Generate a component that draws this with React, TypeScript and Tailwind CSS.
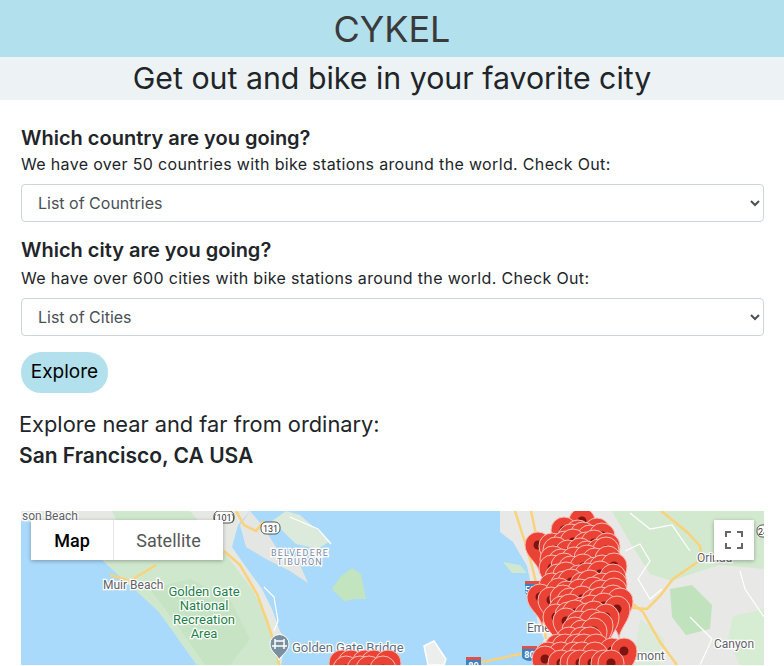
// rows of marker heads: [y, first x, last x, step]
const pinRows: [number, number, number, number][] = [
  [522, 582, 582, 9],
  [532, 563, 597, 17],
  [538, 572, 604, 10],
  [546, 538, 538, 9],
  [545, 552, 608, 11],
  [553, 558, 614, 10],
  [561, 552, 616, 11],
  [569, 553, 618, 10],
  [577, 556, 616, 11],
  [585, 552, 620, 10],
  [598, 540, 540, 9],
  [593, 558, 620, 11],
  [601, 552, 622, 10],
  [609, 560, 616, 11],
  [616, 556, 608, 10],
  [624, 568, 604, 11],
  [632, 574, 598, 10],
  [641, 570, 592, 11],
  [648, 556, 600, 10],
  [652, 612, 622, 10],
  [656, 550, 604, 11],
  [660, 545, 545, 9],
  [664, 562, 612, 10],
  [664, 340, 390, 12],
  [670, 346, 384, 12],
];

// small fixed offsets so the markers don't sit on a visible grid
const pins: [number, number][] = pinRows.flatMap(([y, first, last, step], r) => {
  const row: [number, number][] = [];
  for (let x = first, i = 0; x <= last; x += step, i++) {
    const wobble = first === last ? 0 : ((i * 7 + r * 3) % 5) - 2;
    const lift = first === last || y > 640 ? 0 : ((i * 3 + r) % 5) - 2;
    row.push([x + wobble, y + lift]);
  }
  return row;
});

function Pin({ x, y }: { x: number; y: number }) {
  return (
    <g transform={`translate(${x} ${y})`}>
      <path
        d="M2 29C0 17-13 12-13 0a13 13 0 1 1 26 0C13 12 4 17 2 29Z"
        fill="#ea4335"
        stroke="#f7bcb6"
        strokeWidth="1"
      />
      <circle cx="0" cy="0" r="4.500" fill="#7d1410" />
    </g>
  );
}

function Shield({ x, y, label, w = 16 }: { x: number; y: number; label: string; w?: number }) {
  return (
    <g>
      <rect x={x} y={y} width={w} height="12" rx="5" fill="#fff" stroke="#555" strokeWidth="1" />
      <text x={x + w / 2} y={y + 9.500} textAnchor="middle" fontSize="9" fontFamily="Roboto" fill="#333">
        {label}
      </text>
    </g>
  );
}

function Interstate({ x, y, label }: { x: number; y: number; label: string }) {
  return (
    <g>
      <path d={`M${x} ${y}h15v3h-15Z`} fill="#d9534a" />
      <path d={`M${x} ${y + 3}h15v8q-1 3-7.500 4q-6.500-1-7.500-4Z`} fill="#3f7fc4" />
      <text x={x + 7.500} y={y + 11.500} textAnchor="middle" fontSize="9" fontFamily="Roboto" fontWeight="700" fill="#fff">
        {label}
      </text>
    </g>
  );
}

const mapLabel = "font-['Roboto'] [paint-order:stroke] stroke-white stroke-[2.5px]";

function MapArt() {
  return (
    <svg className="block h-full w-full" viewBox="21 512 743 154" preserveAspectRatio="none">
      <rect x="21" y="512" width="743" height="154" fill="#a9d9fb" />
      {/* marin */}
      <path d="M21 512H250L238 526L232 548L246 568L262 590L272 610L280 632L286 642L281 666H197L177 638L160 612L136 590L112 570L86 545L50 525L21 522Z" fill="#e6e8e4" />
      <path d="M112 512H190L222 550L252 590L268 620L276 650L280 666H197L177 638L158 612L134 590L116 574L96 552L120 530Z" fill="#cfe8cd" />
      <path d="M150 590L190 580L230 600L250 640L230 666H205L180 630Z" fill="#c6e3c4" />
      {/* tiburon */}
      <path d="M250 512L262 526L276 548L300 566L308 584L290 572L266 560L246 548L240 526Z" fill="#e4e6e3" />
      <path d="M286 512L300 516L330 542L318 550L296 545L272 522Z" fill="#dbeadb" />
      <path d="M352 569L361 575L366 600L356 600L344 602L332 590L340 578Z" fill="#c2e4bf" />
      {/* east bay */}
      <path d="M500 512H764V666H533L544 640L538 626L532 590L527 567L513 543L500 533Z" fill="#e8e9e6" />
      <path d="M612 512H764V570L720 566L700 572L672 582L650 575L628 540Z" fill="#d2e9cf" />
      <path d="M670 590L692 586L712 606L710 630L686 636L672 618Z" fill="#c0e2bd" />
      <path d="M733 617L764 610V666H740L728 640Z" fill="#d6ecd3" />
      <path d="M640 620L665 640L660 666H632Z" fill="#dcebd9" />
      <path d="M503 563L520 566L527 574L512 574Z" fill="#cfe8cf" />
      {/* treasure island */}
      <path d="M424 647L434 642L446 660L444 666H428Z" fill="#eceeed" stroke="#fff" strokeWidth="1.500" />
      {/* local roads */}
      <g fill="none" stroke="#ffffff" strokeWidth="1.200">
        <path d="M290 518L318 530L331 545" />
        <path d="M264 588L274 598L278 622L274 632" />
        <path d="M625 552L640 545L650 562L638 580L650 600L662 590" />
        <path d="M630 514L650 530L672 526L690 552" />
        <path d="M740 572L745 590L764 618" />
        <path d="M690 618L712 640L700 666" />
        <path d="M64 512L92 530L116 538" />
      </g>
      {/* highways */}
      <g fill="none" stroke="#fad27a" strokeWidth="2.500">
        <path d="M236 512L244 526L256 532L264 522" />
        <path d="M224 552L240 566L257 595L268 625L276 650L279 666" />
        <path d="M110 576L130 582L156 566" />
        <path d="M515 512L524 540L532 567L540 600L546 640" />
        <path d="M531 512L537 540" />
        <path d="M660 511L687 533L700 547L702 560L673 580L660 597L647 610L622 608" />
        <path d="M622 596L643 613L660 643L677 666" />
        <path d="M468 666L525 654" />
      </g>
      <text x="22" y="521" fontSize="12" fill="#5f6368" className={mapLabel}>son Beach</text>
      <text x="103" y="590" fontSize="12" fill="#5f6368" className={mapLabel}>Muir Beach</text>
      <g fontSize="13" fill="#1e8149" textAnchor="middle" className={mapLabel}>
        <text x="204" y="597">Golden Gate</text>
        <text x="204" y="611">National</text>
        <text x="204" y="625">Recreation</text>
        <text x="204" y="639">Area</text>
      </g>
      <g fontSize="9" fill="#7b8aa6" textAnchor="middle" letterSpacing="1.200" className={mapLabel}>
        <text x="300" y="557">BELVEDERE</text>
        <text x="300" y="566">TIBURON</text>
      </g>
      <text x="292" y="653" fontSize="13" fill="#5f7284" className={mapLabel}>Golden Gate Bridge</text>
      <text x="527" y="633" fontSize="12" fill="#5f6368" className={mapLabel}>Eme</text>
      <text x="630" y="661" fontSize="12" fill="#5f6368" className={mapLabel}>dmont</text>
      <text x="714" y="649" fontSize="12" fill="#5f6368" className={mapLabel}>Canyon</text>
      <text x="697" y="563" fontSize="12" fill="#5f6368" className={mapLabel}>Orinda</text>
      <Shield x={214} y={512} label="(101)" w={20} />
      <Shield x={261} y={523} label="131" w={19} />
      <Shield x={757} y={526} label="24" w={12} />
      <Interstate x={525} y={582} label="580" />
      <Interstate x={522} y={647} label="80" />
      <Interstate x={466} y={658} label="80" />
      <path d="M279 661c-1-5-9-8-9-16a9.500 9.500 0 1 1 19 0c0 8-8 11-10 16Z" fill="#7b909e" stroke="#fff" strokeWidth="1" />
      <path d="M275 640v10M284 640v10M272 647h15M275 642h9" stroke="#fff" strokeWidth="1.500" fill="none" />
      {pins.map(([x, y]) => (
        <Pin key={`${x}-${y}`} x={x} y={y} />
      ))}
    </svg>
  );
}

export default function App() {
  return (
    <div className="h-[666px] overflow-hidden bg-white font-['Inter','Open_Sans',sans-serif] text-[#212529]">
      <div className="flex h-[57px] items-center justify-center bg-[#b2e0ec]">
        <h1 className="text-[36px] leading-none text-[#3a3a3a]">CYKEL</h1>
      </div>
      <div className="flex h-[43px] items-center justify-center bg-[#edf3f4]">
        <h2 className="text-[30.300px] leading-none">Get out and bike in your favorite city</h2>
      </div>

      <div className="pl-[21px] pr-[20px] pt-[26px]">
        <h3 className="text-[20px] leading-[24px] font-semibold">Which country are you going?</h3>
        <p className="mt-[2px] text-[16px] leading-[24px] tracking-[0.340px]">We have over 50 countries with bike stations around the world. Check Out:</p>
        <select className="mt-[8px] block h-[38px] w-full rounded-[4px] border border-[#ced4da] bg-white pl-[12px] pr-[8px] text-[16px] text-[#495057]">
          <option>List of Countries</option>
        </select>

        <h3 className="mt-[16px] text-[20px] leading-[24px] font-semibold">Which city are you going?</h3>
        <p className="mt-[4px] text-[16px] leading-[24px] tracking-[0.340px]">We have over 600 cities with bike stations around the world. Check Out:</p>
        <select className="mt-[8px] block h-[38px] w-full rounded-[4px] border border-[#ced4da] bg-white pl-[12px] pr-[8px] text-[16px] text-[#495057]">
          <option>List of Cities</option>
        </select>

        <button className="mt-[16px] block h-[41px] w-[87px] rounded-[20px] bg-[#b2e0ec] text-[19px] text-black">Explore</button>

        <p className="mt-[16px] -ml-[2px] text-[21.800px] leading-[30px]">Explore near and far from ordinary:</p>
        <p className="-ml-[2px] mt-[2px] text-[21px] leading-[30px] font-semibold">San Francisco, CA USA</p>

        <div className="relative mt-[40px] h-[154px] overflow-hidden">
          <MapArt />
          <div className="absolute top-[9px] left-[10px] flex h-[40px] bg-white font-['Roboto',sans-serif] shadow-[0_1px_4px_rgba(0,0,0,0.3)]">
            <div className="flex w-[82px] items-center justify-center text-[18px] font-medium text-black">Map</div>
            <div className="flex w-[110px] items-center justify-center border-l border-[#e6e6e6] text-[18px] text-[#565656]">Satellite</div>
          </div>
          <div className="absolute top-[9px] right-[10px] flex h-[40px] w-[40px] items-center justify-center bg-white shadow-[0_1px_4px_rgba(0,0,0,0.3)]">
            <svg width="18" height="18" viewBox="0 0 18 18" fill="none" stroke="#666" strokeWidth="2">
              <path d="M1 6V1h5M12 1h5v5M17 12v5h-5M6 17H1v-5" />
            </svg>
          </div>
        </div>
      </div>
    </div>
  );
}
